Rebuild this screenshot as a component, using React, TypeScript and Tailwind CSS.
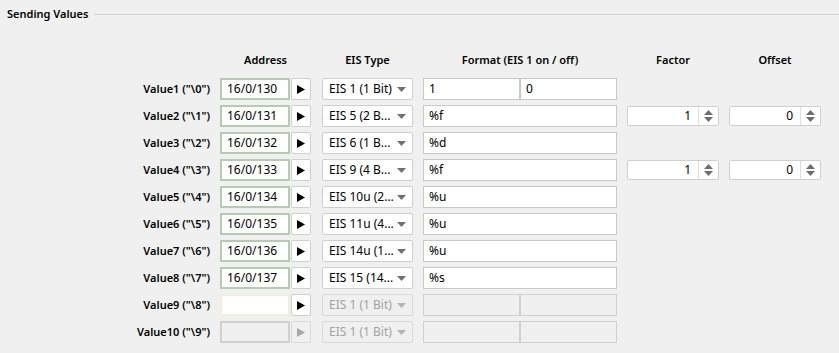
import React from 'react';

type Row = {
  label: string;
  address?: string;
  eis: string;
  format?: string;
  split?: [string, string];
  spin?: boolean;
  state: 'ok' | 'empty' | 'off';
};

const rows: Row[] = [
  { label: 'Value1 ("\\0")', address: '16/0/130', eis: 'EIS 1 (1 Bit)', split: ['1', '0'], state: 'ok' },
  { label: 'Value2 ("\\1")', address: '16/0/131', eis: 'EIS 5 (2 B...', format: '%f', spin: true, state: 'ok' },
  { label: 'Value3 ("\\2")', address: '16/0/132', eis: 'EIS 6 (1 B...', format: '%d', state: 'ok' },
  { label: 'Value4 ("\\3")', address: '16/0/133', eis: 'EIS 9 (4 B...', format: '%f', spin: true, state: 'ok' },
  { label: 'Value5 ("\\4")', address: '16/0/134', eis: 'EIS 10u (2...', format: '%u', state: 'ok' },
  { label: 'Value6 ("\\5")', address: '16/0/135', eis: 'EIS 11u (4...', format: '%u', state: 'ok' },
  { label: 'Value7 ("\\6")', address: '16/0/136', eis: 'EIS 14u (1...', format: '%u', state: 'ok' },
  { label: 'Value8 ("\\7")', address: '16/0/137', eis: 'EIS 15 (14...', format: '%s', state: 'ok' },
  { label: 'Value9 ("\\8")', eis: 'EIS 1 (1 Bit)', split: ['', ''], state: 'empty' },
  { label: 'Value10 ("\\9")', eis: 'EIS 1 (1 Bit)', split: ['', ''], state: 'off' },
];

const Play = ({ off }: { off?: boolean }) => (
  <svg width="8" height="9" viewBox="0 0 8 9">
    <polygon points="0,0 8,4.5 0,9" fill={off ? '#a8a8a8' : '#000'} />
  </svg>
);

const Down = ({ off }: { off?: boolean }) => (
  <svg width="9" height="5" viewBox="0 0 9 5">
    <polygon points="0,0 9,0 4.5,5" fill={off ? '#b4b4b4' : '#707070'} />
  </svg>
);

const SpinArrows = () => (
  <svg width="9" height="12" viewBox="0 0 9 12">
    <polygon points="0,5 9,5 4.5,0" fill="#6e6e6e" />
    <polygon points="0,7 9,7 4.5,12" fill="#6e6e6e" />
  </svg>
);

function Spin({ value }: { value: string }) {
  return (
    <div className="flex w-[92px] h-full bg-white border border-[#cfcfcf] rounded-[2px]">
      <div className="flex-1 flex items-center justify-end pr-[7px]">{value}</div>
      <div className="w-[20px] border-l border-[#dcdcdc] flex items-center justify-center">
        <SpinArrows />
      </div>
    </div>
  );
}

function ValueRow({ row }: { row: Row }) {
  const off = row.state === 'off';
  const addrBorder =
    row.state === 'ok' ? 'border-[#b3cdae] bg-white' : row.state === 'empty' ? 'border-[#f1eedb] bg-white' : 'border-[#d0d0d0] bg-[#f0f0f0]';
  const comboOff = row.state !== 'ok';
  return (
    <div className="flex h-[22px] items-stretch">
      <div className="w-[210px] flex items-center justify-end font-semibold text-[11px]">{row.label}</div>
      <div className={`ml-[10px] w-[70px] border-2 ${addrBorder} flex items-center pl-[5px]`}>{row.address}</div>
      <div
        className={`ml-px w-[20px] rounded-[2px] border flex items-center justify-center ${
          off ? 'border-[#d8d8d8] bg-[#f0f0f0]' : 'border-[#cfcfcf] bg-white'
        }`}
      >
        <Play off={off} />
      </div>
      <div
        className={`ml-[11px] w-[91px] rounded-[2px] border flex items-center pl-[6px] pr-[6px] ${
          comboOff ? 'border-[#d8d8d8] bg-[#f0f0f0] text-[#a2a2a2]' : 'border-[#cfcfcf] bg-white'
        }`}
      >
        <span className="flex-1 whitespace-nowrap overflow-hidden">{row.eis}</span>
        <Down off={comboOff} />
      </div>
      <div className="ml-[10px] w-[194px] flex">
        {row.split ? (
          <>
            <div
              className={`w-[97px] border flex items-center pl-[5px] ${
                comboOff ? 'border-[#d0d0d0] bg-[#f0f0f0]' : 'border-[#c8c8c8] bg-white'
              }`}
            >
              {row.split[0]}
            </div>
            <div
              className={`w-[97px] border flex items-center pl-[5px] ${
                comboOff ? 'border-[#d0d0d0] bg-[#f0f0f0]' : 'border-[#c8c8c8] bg-white'
              }`}
            >
              {row.split[1]}
            </div>
          </>
        ) : (
          <div className="w-full border border-[#c8c8c8] bg-white flex items-center pl-[5px]">{row.format}</div>
        )}
      </div>
      {row.spin && (
        <div className="flex">
          <div className="ml-[10px] h-full py-px">
            <Spin value="1" />
          </div>
          <div className="ml-[10px] h-full py-px">
            <Spin value="0" />
          </div>
        </div>
      )}
    </div>
  );
}

export default function App() {
  return (
    <div
      className="w-[839px] h-[353px] bg-[#f0f0f0] text-[12px] text-black overflow-hidden"
      style={{ fontFamily: '"Noto Sans", "Open Sans", sans-serif' }}
    >
      <div className="h-[28px] flex items-center pl-[7px] gap-[6px]">
        <span className="font-semibold text-[11px]">Sending Values</span>
        <div className="flex-1 h-px bg-[#d4d4d4]" />
      </div>
      <div className="mt-[22px] h-[20px] flex items-center font-semibold text-[11px]">
        <div className="ml-[220px] w-[91px] text-center">Address</div>
        <div className="ml-[11px] w-[91px] text-center">EIS Type</div>
        <div className="ml-[10px] w-[194px] text-center">Format (EIS 1 on / off)</div>
        <div className="ml-[10px] w-[92px] text-center">Factor</div>
        <div className="ml-[10px] w-[92px] text-center">Offset</div>
      </div>
      <div className="mt-[8px] flex flex-col gap-[5px]">
        {rows.map(r => (
          <ValueRow key={r.label} row={r} />
        ))}
      </div>
    </div>
  );
}
